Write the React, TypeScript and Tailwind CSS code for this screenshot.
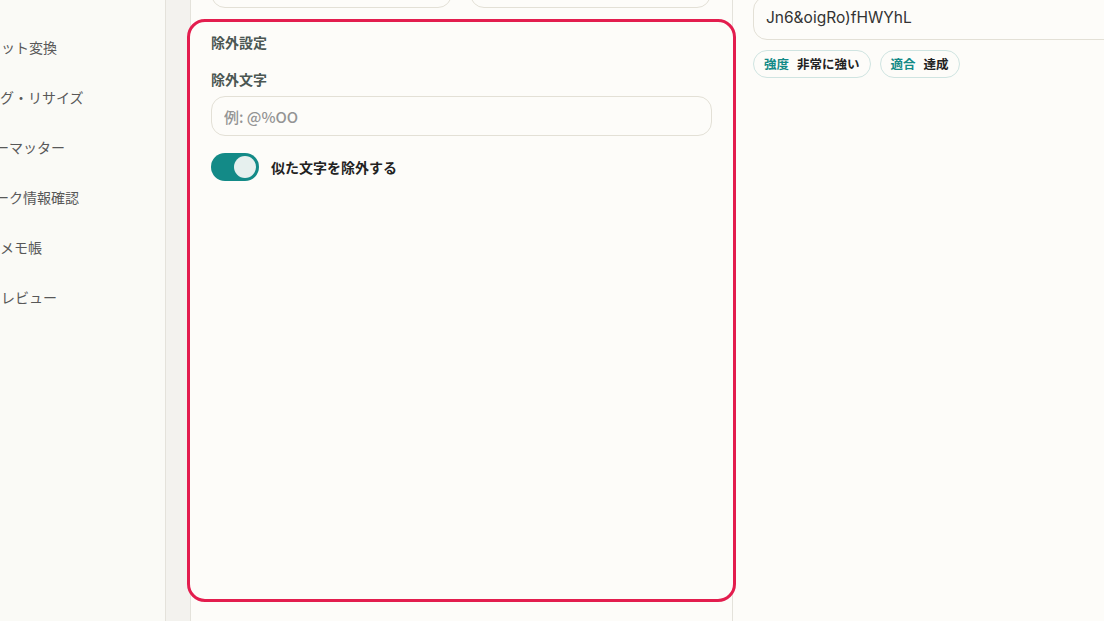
import { useState } from 'react';

const navItems = [
  { label: 'ット変換', offset: 'ml-[1px]' },
  { label: 'グ・リサイズ', offset: 'ml-[0px]' },
  { label: 'ーマッター', offset: '-ml-[5px]' },
  { label: 'ーク情報確認', offset: '-ml-[5px]' },
  { label: 'メモ帳', offset: 'ml-[0px]' },
  { label: 'レビュー', offset: 'ml-[1px]' },
];

const App = () => {
  const [excludeSimilar, setExcludeSimilar] = useState(true);

  return (
    <div className="flex h-[621px] w-[1104px] overflow-hidden bg-[#fbfaf6] font-['Noto_Sans_CJK_JP','Noto_Sans',sans-serif] antialiased">
      {/* Sidebar (scrolled) */}
      <aside className="flex w-[166px] shrink-0 flex-col overflow-hidden border-r border-[#e4e2db] bg-[#fafaf6] pt-[22px]">
        {navItems.map((item) => (
          <div key={item.label} className="flex h-[50px] items-center whitespace-nowrap">
            <span className={`${item.offset} text-[14px] text-[#585858]`}>{item.label}</span>
          </div>
        ))}
      </aside>

      <div className="w-[24px] shrink-0 bg-[#f3f2ee]" />

      {/* Settings column */}
      <main className="relative z-10 flex w-[543px] shrink-0 flex-col border-x border-[#e4e2db] bg-[#fdfcf9]">
        <div className="-mt-[36px] grid grid-cols-2 gap-[18px] pl-[20px] pr-[21px]">
          <div className="h-[44px] rounded-[14px] border border-[#e3e0d6] bg-[#fdfcf9]" />
          <div className="h-[44px] rounded-[14px] border border-[#e3e0d6] bg-[#fdfcf9]" />
        </div>

        <section className="mt-[11px] -ml-[4px] -mr-[4px] flex h-[583px] flex-col rounded-[18px] border-[3px] border-[#e31d4e] bg-[#fdfcf9] px-[21px] pt-[10px]">
          <h3 className="text-[14px] leading-[20px] font-bold text-[#4b5753]">除外設定</h3>

          <label className="mt-[17px] text-[14px] leading-[20px] font-bold text-[#4b5753]">除外文字</label>
          <input
            placeholder="例: @%OO"
            className="mt-[7px] h-[40px] w-full rounded-[14px] border border-[#e3e0d6] bg-[#fdfcf9] px-[12px] text-[15px] font-medium text-[#333] outline-none placeholder:text-[#949494]"
          />

          <div className="mt-[17px] flex items-center gap-[12px]">
            <button
              onClick={() => setExcludeSimilar(!excludeSimilar)}
              className={`flex h-[28px] w-[48px] items-center rounded-full p-[3px] ${excludeSimilar ? 'justify-end bg-[#138a87]' : 'justify-start bg-[#d6d3ca]'}`}
            >
              <span className="h-[22px] w-[22px] rounded-full bg-[#e6f0ee]" />
            </button>
            <span className="text-[14px] font-bold text-[#222]">似た文字を除外する</span>
          </div>
        </section>
      </main>

      {/* Result column */}
      <div className="flex min-w-0 flex-1 flex-col bg-[#fdfcf9] pl-[20px]">
        <div className="-mt-[4px] flex h-[44px] w-[400px] shrink-0 items-center rounded-[14px] border border-[#e3e0d6] px-[12px]">
          <span className="font-['Inter',sans-serif] text-[15.5px] text-[#333]">Jn6&amp;oigRo)fHWYhL</span>
        </div>
        <div className="mt-[10px] flex gap-[9px]">
          {[
            { k: '強度', v: '非常に強い' },
            { k: '適合', v: '達成' },
          ].map((p) => (
            <div key={p.k} className="flex h-[28px] items-center gap-[8px] rounded-full border border-[#cfe4e1] px-[10px] text-[12.5px] font-bold">
              <span className="text-[#138a87]">{p.k}</span>
              <span className="text-[#222]">{p.v}</span>
            </div>
          ))}
        </div>
      </div>
    </div>
  );
};

export default App;
